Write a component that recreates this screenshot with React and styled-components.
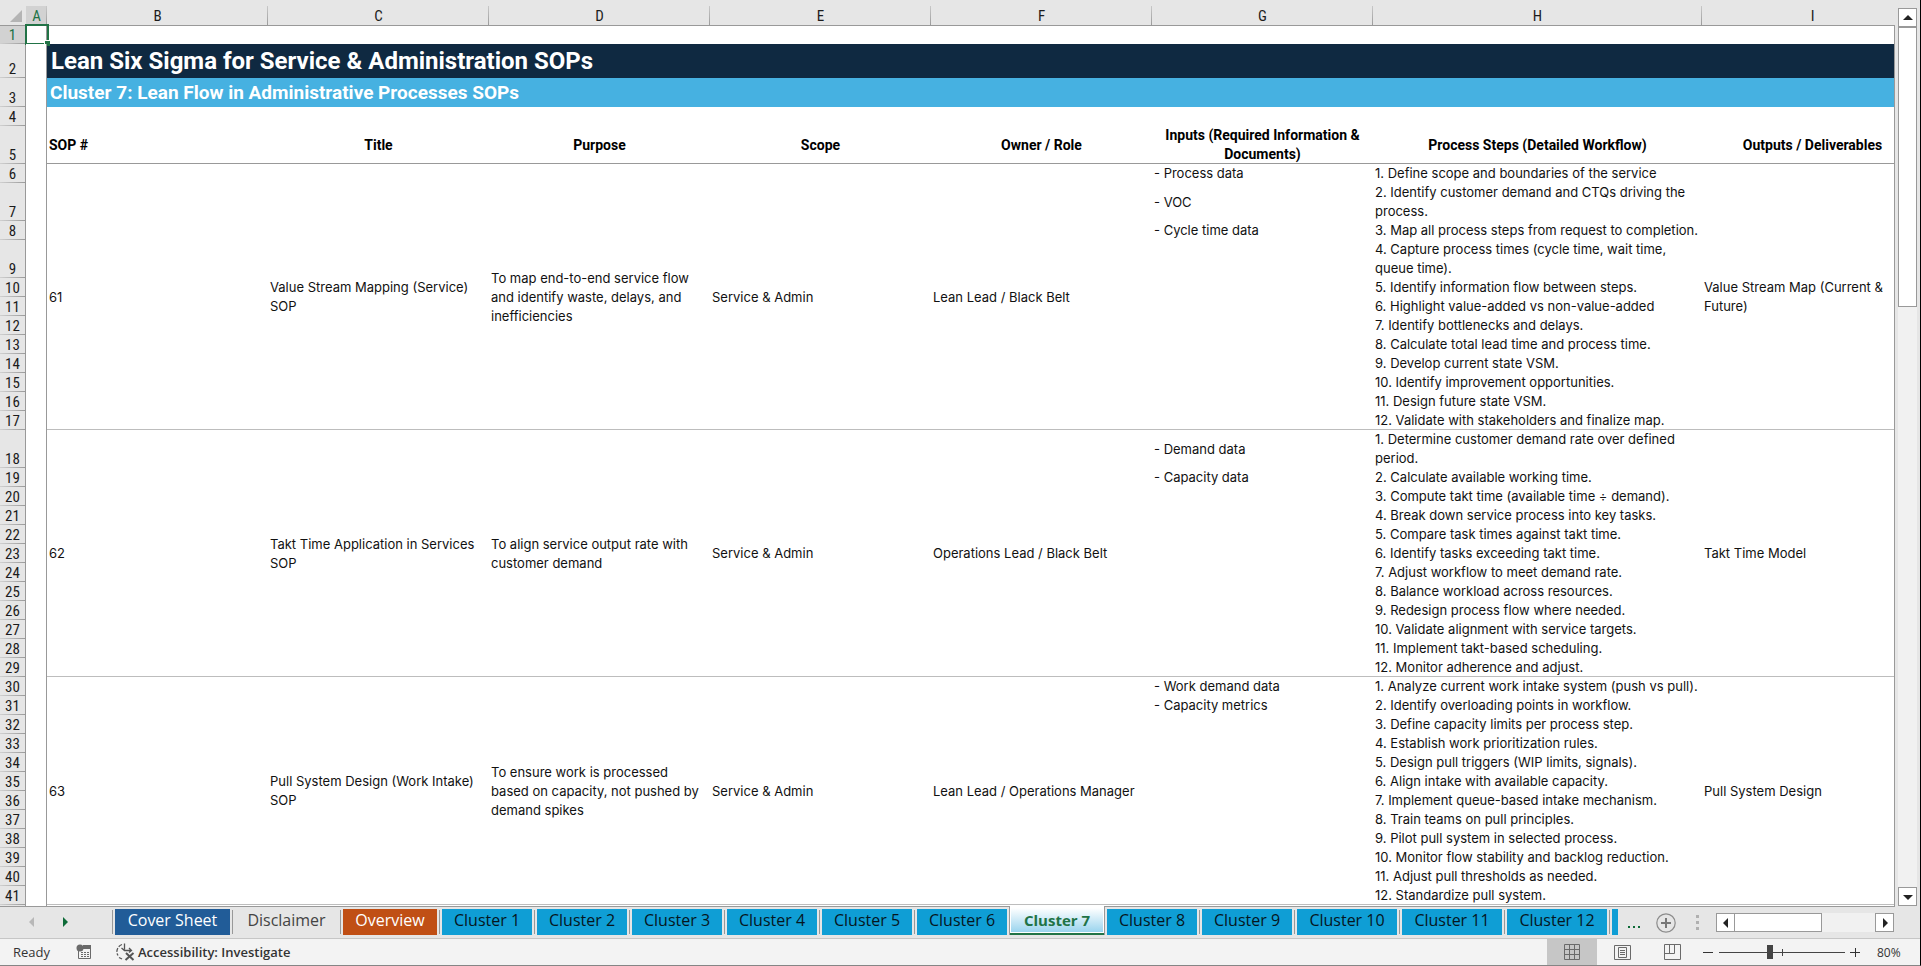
import React from 'react';
import styled, { createGlobalStyle, css } from 'styled-components';

const color = {
  chrome: '#e6e6e6',
  status: '#f3f3f3',
  line: '#999999',
  softLine: '#bdbdbd',
  selectedHeader: '#d2d2d2',
  green: '#217346',
  navy: '#0f2941',
  sky: '#46b1e1',
  clusterTab: '#0f9ed5',
  coverTab: '#215c98',
  overviewTab: '#c04f15',
  icon: '#6a6a6a',
};

const GlobalStyle = createGlobalStyle`
  *, *::before, *::after { box-sizing: border-box; }
  body { margin: 0; background: ${color.chrome}; font-family: Inter, "Liberation Sans", sans-serif; }
  button { margin: 0; padding: 0; border: 0; background: none; font: inherit; color: inherit; cursor: pointer; }
`;

const Window = styled.div`
  display: flex;
  flex-direction: column;
  height: 100vh;
  overflow: hidden;
  border-right: 1px solid #000;
  border-bottom: 1px solid #858585;
  background: ${color.chrome};
`;

const Workspace = styled.main`
  flex: 1;
  display: flex;
  min-height: 0;
`;

const SheetPane = styled.section`
  flex: 1;
  min-width: 0;
  display: flex;
  padding: 0 1px 1px 0;
  background: linear-gradient(${color.chrome} 25px, ${color.line} 25px);
`;

const SheetView = styled.div`
  flex: 1;
  min-width: 0;
  overflow: hidden;
  background: linear-gradient(90deg, ${color.chrome} 25px, ${color.line} 25px, ${color.line} 26px, #fff 26px, #fff 46px, ${color.line} 46px, ${color.line} 47px, #fff 47px);
`;

const Grid = styled.table`
  width: 1923px;
  table-layout: fixed;
  border-collapse: separate;
  border-spacing: 0;
  font-size: 13px;
  line-height: 19px;
  color: #111;

  th, td { padding: 0; }
`;

const Col = styled.col`
  width: ${(p) => p.$w}px;
`;

const Row = styled.tr`
  height: ${(p) => p.$h}px;
`;

const headerFont = css`
  font-family: "Roboto Condensed", Roboto, "Liberation Sans", sans-serif;
  font-weight: 400;
  font-size: 15px;
  color: ${(p) => (p.$selected ? color.green : '#1c1c1c')};
`;

const Corner = styled.td`
  height: 26px;
  background: ${color.chrome};
  box-shadow: inset 0 -1px ${color.line};
  vertical-align: bottom;
  text-align: right;

  svg { display: block; margin: 0 4px 4px auto; }
`;

const ColumnHeader = styled.th`
  ${headerFont}
  height: 26px;
  vertical-align: bottom;
  background:
    linear-gradient(${color.line}, ${color.line}) bottom / 100% 1px no-repeat,
    linear-gradient(#c8c8c8, ${color.line}) right bottom / 1px 20px no-repeat,
    linear-gradient(${(p) => (p.$selected ? color.selectedHeader : color.chrome)}, ${(p) => (p.$selected ? color.selectedHeader : color.chrome)}) bottom / 100% 20px no-repeat,
    ${color.chrome};
`;

const RowHeader = styled.th`
  ${headerFont}
  line-height: 18px;
  vertical-align: bottom;
  && { padding-right: 1px; }
  text-align: center;
  background:
    linear-gradient(${color.line}, ${color.line}) right / 1px 100% no-repeat,
    linear-gradient(90deg, #d0d0d0, ${color.line}) bottom / 100% 1px no-repeat,
    ${(p) => (p.$selected ? color.selectedHeader : color.chrome)};
`;

const MarginCell = styled.td`
  position: relative;
  background: #fff;
  box-shadow: inset -1px 0 ${color.line};
`;

const ActiveCell = styled.span`
  position: absolute;
  inset: -2px -2px -1px -1px;
  border: 2px solid ${color.green};

  &::after {
    content: '';
    position: absolute;
    right: -3px;
    bottom: -3px;
    width: 6px;
    height: 6px;
    border: solid #fff;
    border-width: 1px 0 0 1px;
    background: ${color.green};
  }
`;

const Banner = styled.td`
  && { padding: 0 ${(p) => (p.$main ? 4 : 3)}px; }
  background: ${(p) => (p.$main ? color.navy : color.sky)};
  color: #fff;
  font-family: Roboto, "Liberation Sans", sans-serif;
  font-weight: 700;
  font-size: ${(p) => (p.$main ? 24 : 19)}px;
  line-height: 28px;
`;

const FieldHeader = styled.th`
  && { padding: 0 2px; }
  font-family: Roboto, "Liberation Sans", sans-serif;
  font-size: 14px;
  font-weight: 700;
  color: #000;
  text-align: ${(p) => (p.$left ? 'left' : 'center')};
  box-shadow: inset 0 -1px ${color.line};
`;

const Cell = styled.td`
  && { padding: 0 2px; }
  vertical-align: middle;
  text-align: left;
  box-shadow: ${(p) => (p.$last ? `inset 0 -1px ${color.softLine}` : 'none')};
`;

const ScrollColumn = styled.div`
  display: flex;
  flex-direction: column;
  width: 25px;
  padding: 8px 3px 1px;
`;

const ArrowButton = styled.button`
  flex: none;
  display: grid;
  place-items: center;
  width: 19px;
  height: 19px;
  border: 1px solid ${color.line};
  background: #fff;
`;

const VerticalTrack = styled.div`
  flex: 1;
  display: flex;
  flex-direction: column;
  background: #f1f1f1;
`;

const VerticalThumb = styled.div`
  flex: 12;
  border: 1px solid ${color.line};
  background: #fff;
`;

const TrackRest = styled.div`
  flex: 25;
`;

const TabBar = styled.nav`
  flex: none;
  display: flex;
  height: 31px;
  font-family: "Open Sans", "Noto Sans", sans-serif;
  font-size: 16px;
  line-height: 22px;
`;

const TabArrows = styled.div`
  flex: none;
  display: flex;
  gap: 19px;
  width: 112px;
  padding: 3px 0 5px 25px;

  button { display: grid; place-items: center; width: 14px; }
`;

const TabList = styled.ul`
  flex: 1;
  display: flex;
  min-width: 0;
  margin: -1px 0 0;
  padding: 1px 0 0;
  overflow: hidden;
  list-style: none;
`;

const TabItem = styled.li`
  flex: none;
  padding: ${(p) => (p.$active ? '0' : '2px 2px 0 3px')};
  background: ${(p) => (p.$divider ? `linear-gradient(${color.line}, ${color.line}) 0 3px / 1px 24px no-repeat` : 'none')};
`;

const tones = {
  cover: [color.coverTab, '#fff'],
  plain: ['transparent', '#444'],
  overview: [color.overviewTab, '#fff'],
  cluster: [color.clusterTab, '#06161e'],
};

const Tab = styled.button`
  display: block;
  width: ${(p) => p.$w}px;
  height: 26px;
  padding-bottom: 4px;
  background: ${(p) => tones[p.$tone][0]};
  color: ${(p) => tones[p.$tone][1]};
  white-space: nowrap;

  ${(p) => p.$active && css`
    position: relative;
    height: 29px;
    margin: -1px -1px 0 0;
    padding-bottom: 2px;
    border: solid ${color.line};
    border-width: 0 1px;
    background:
      linear-gradient(${color.green}, ${color.green}) bottom / 100% 2px no-repeat,
      linear-gradient(#fff, #9ad4ee) 1px 2px / 92px 24px no-repeat,
      #fff;
    color: ${color.green};
    font-weight: 700;
    font-size: 15px;
  `}
`;

const TabTools = styled.div`
  flex: none;
  display: flex;
  align-items: center;
  padding-right: 26px;

  svg { display: block; }
`;

const MoreButton = styled.button`
  margin: 0 15px 0 9px;
`;

const Grip = styled.span`
  margin: 0 17px 0 20px;
`;

const HorizontalScroll = styled.div`
  display: flex;
  width: 178px;
  background: #f1f1f1;
`;

const HorizontalThumb = styled.div`
  width: 88px;
  margin-left: -1px;
  border: 1px solid ${color.line};
  background: #fff;
`;

const HorizontalRest = styled.div`
  flex: 1;
`;

const StatusBar = styled.footer`
  flex: none;
  display: flex;
  align-items: stretch;
  height: 27px;
  border-top: 1px solid #c6c6c6;
  background: ${color.status};
  font-family: "Open Sans", "Noto Sans", sans-serif;
  font-size: 13px;
  color: #333;

  svg { display: block; }
`;

const StatusLeft = styled.div`
  flex: 1;
  display: flex;
  align-items: center;
  padding-left: 13px;
`;

const MacroButton = styled.button`
  margin: 0 24px 0 26px;
`;

const AccessibilityButton = styled.button`
  display: flex;
  align-items: center;
  gap: 3px;
  font-weight: 600;
`;

const ViewButton = styled.button`
  display: grid;
  place-items: center;
  width: 50px;
  background: ${(p) => (p.$active ? '#c6c6c6' : 'transparent')};
`;

const ZoomControls = styled.div`
  display: flex;
  align-items: center;
  padding: 0 19px 0 6px;
`;

const ZoomRange = styled.input`
  appearance: none;
  width: 126px;
  height: 26px;
  margin: 0 5px 0 6px;
  background:
    linear-gradient(#444, #444) 63px 50% / 1px 7px no-repeat,
    linear-gradient(#444, #444) center / 100% 1px no-repeat;

  &::-webkit-slider-thumb {
    appearance: none;
    width: 6px;
    height: 14px;
    background: #444;
  }
`;

const ZoomLabel = styled.output`
  width: 24px;
  margin-left: 17px;
  font-size: 12px;
  white-space: nowrap;
`;

const Triangle = ({ d, fill = '#222' }) => (
  <svg width="10" height="10" viewBox="0 0 10 10" aria-hidden="true"><path d={d} fill={fill} /></svg>
);
const UP = 'M5 2 L10 7 H0 Z';
const DOWN = 'M0 3 H10 L5 8 Z';
const LEFT = 'M7 0 V10 L2 5 Z';
const RIGHT = 'M3 0 V10 L8 5 Z';

const AddIcon = () => (
  <svg width="20" height="20" viewBox="0 0 20 20" fill="none" aria-hidden="true">
    <circle cx="10" cy="10" r="9.2" stroke="#8c8c8c" strokeWidth="1.2" />
    <path d="M10 5v10M5 10h10" stroke="#777" strokeWidth="2" />
  </svg>
);

const MacroIcon = () => (
  <svg width="16" height="16" viewBox="0 0 16 16" fill="none" aria-hidden="true">
    <path d="M2.500 6V14.500H14.500V1.500" stroke={color.icon} />
    <path d="M7 1h8v4H7z" fill={color.icon} />
    <circle cx="4" cy="4" r="3.500" fill={color.icon} />
    <path d="M5 8.500h2M8 8.500h2M11 8.500h2M5 10.500h2M8 10.500h2M11 10.500h2M5 12.500h2M8 12.500h2M11 12.500h2" stroke={color.icon} />
  </svg>
);

const AccessibilityIcon = () => (
  <svg width="19" height="18" viewBox="0 0 19 18" fill="none" stroke="#555" aria-hidden="true">
    <path d="M6 1.500A7.500 7.500 0 0 0 2 12.500" strokeWidth="1.300" strokeDasharray="4 1.500" />
    <path d="M3 14.500 L6 16" strokeWidth="1.300" />
    <path d="M8.500 0.500V6.500M5.500 5L8.500 7.500H15.500M13 5L15.500 7.500L13 9.500" strokeWidth="1.300" />
    <path d="M10 10L17.500 17M17.500 10L9.500 17" strokeWidth="2" />
  </svg>
);

const NormalViewIcon = () => (
  <svg width="16" height="16" viewBox="0 0 16 16" fill="none" stroke={color.icon} aria-hidden="true">
    <path d="M0.500 0.500h15v15h-15zM5.500 0.500v15M10.500 0.500v15M0.500 5.500h15M0.500 10.500h15" />
  </svg>
);

const PageLayoutIcon = () => (
  <svg width="17" height="15" viewBox="0 0 17 15" fill="none" stroke={color.icon} aria-hidden="true">
    <path d="M0.500 0.500h16v14h-16zM4.500 2.500h8v10h-8zM6 5.500h5M6 7.500h5M6 9.500h5" />
  </svg>
);

const PageBreakIcon = () => (
  <svg width="17" height="16" viewBox="0 0 17 16" fill="none" stroke={color.icon} aria-hidden="true">
    <path d="M0.500 0.500h16v15h-16zM5.500 0.500v9M10.500 0.500v9M0.500 9.500h10" />
  </svg>
);

const columns = [
  ['A', 21], ['B', 221], ['C', 221], ['D', 221], ['E', 221], ['F', 221], ['G', 221], ['H', 329], ['I', 221],
];

const fields = [
  'SOP #', 'Title', 'Purpose', 'Scope', 'Owner / Role', 'Inputs (Required Information & Documents)',
  'Process Steps (Detailed Workflow)', 'Outputs / Deliverables',
];

const sops = [
  {
    start: 6,
    lead: ['61', 'Value Stream Mapping (Service) SOP', 'To map end-to-end service flow and identify waste, delays, and inefficiencies', 'Service & Admin', 'Lean Lead / Black Belt'],
    inputs: ['- Process data', '- VOC', '- Cycle time data'],
    output: 'Value Stream Map (Current & Future)',
    tall: [2, 4],
    steps: [
      '1. Define scope and boundaries of the service',
      '2. Identify customer demand and CTQs driving the process.',
      '3. Map all process steps from request to completion.',
      '4. Capture process times (cycle time, wait time, queue time).',
      '5. Identify information flow between steps.',
      '6. Highlight value-added vs non-value-added',
      '7. Identify bottlenecks and delays.',
      '8. Calculate total lead time and process time.',
      '9. Develop current state VSM.',
      '10. Identify improvement opportunities.',
      '11. Design future state VSM.',
      '12. Validate with stakeholders and finalize map.',
    ],
  },
  {
    start: 18,
    lead: ['62', 'Takt Time Application in Services SOP', 'To align service output rate with customer demand', 'Service & Admin', 'Operations Lead / Black Belt'],
    inputs: ['- Demand data', '- Capacity data'],
    output: 'Takt Time Model',
    tall: [1],
    steps: [
      '1. Determine customer demand rate over defined period.',
      '2. Calculate available working time.',
      '3. Compute takt time (available time ÷ demand).',
      '4. Break down service process into key tasks.',
      '5. Compare task times against takt time.',
      '6. Identify tasks exceeding takt time.',
      '7. Adjust workflow to meet demand rate.',
      '8. Balance workload across resources.',
      '9. Redesign process flow where needed.',
      '10. Validate alignment with service targets.',
      '11. Implement takt-based scheduling.',
      '12. Monitor adherence and adjust.',
    ],
  },
  {
    start: 30,
    lead: ['63', 'Pull System Design (Work Intake) SOP', 'To ensure work is processed based on capacity, not pushed by demand spikes', 'Service & Admin', 'Lean Lead / Operations Manager'],
    inputs: ['- Work demand data', '- Capacity metrics'],
    output: 'Pull System Design',
    tall: [],
    steps: [
      '1. Analyze current work intake system (push vs pull).',
      '2. Identify overloading points in workflow.',
      '3. Define capacity limits per process step.',
      '4. Establish work prioritization rules.',
      '5. Design pull triggers (WIP limits, signals).',
      '6. Align intake with available capacity.',
      '7. Implement queue-based intake mechanism.',
      '8. Train teams on pull principles.',
      '9. Pilot pull system in selected process.',
      '10. Monitor flow stability and backlog reduction.',
      '11. Adjust pull thresholds as needed.',
      '12. Standardize pull system.',
    ],
  },
];

const clusterTab = (n) => ({ label: `Cluster ${n}`, tone: 'cluster', w: n > 9 ? 100 : 90 });
const tabs = [
  { label: 'Cover Sheet', tone: 'cover', w: 115 },
  { label: 'Disclaimer', tone: 'plain', w: 103 },
  { label: 'Overview', tone: 'overview', w: 94 },
  ...Array.from({ length: 12 }, (_, i) => clusterTab(i + 1)),
];
const ACTIVE = 'Cluster 7';

function SopRows({ sop }) {
  const count = sop.steps.length;
  return sop.steps.map((step, i) => (
    <Row key={step} $h={sop.tall.includes(i + 1) ? 38 : 19}>
      <RowHeader scope="row">{sop.start + i}</RowHeader>
      <MarginCell />
      {i === 0 && sop.lead.map((text) => <Cell key={text} rowSpan={count} $last>{text}</Cell>)}
      <Cell $last={i === count - 1}>{sop.inputs[i]}</Cell>
      <Cell $last={i === count - 1}>{step}</Cell>
      {i === 0 && <Cell rowSpan={count} $last>{sop.output}</Cell>}
    </Row>
  ));
}

function Sheet() {
  return (
    <Grid>
      <colgroup>
        <Col $w={26} />
        {columns.map(([name, w]) => <Col key={name} $w={w} />)}
      </colgroup>
      <thead>
        <Row $h={26}>
          <Corner>
            <svg width="12" height="12" viewBox="0 0 12 12" aria-hidden="true"><path d="M12 0V12H0Z" fill="#b4b4b4" /></svg>
          </Corner>
          {columns.map(([name]) => <ColumnHeader key={name} scope="col" $selected={name === 'A'}>{name}</ColumnHeader>)}
        </Row>
      </thead>
      <tbody>
        <Row $h={18}>
          <RowHeader scope="row" $selected>1</RowHeader>
          <MarginCell><ActiveCell /></MarginCell>
          <td colSpan={8} />
        </Row>
        <Row $h={34}>
          <RowHeader scope="row">2</RowHeader>
          <MarginCell />
          <Banner colSpan={8} $main>Lean Six Sigma for Service &amp; Administration SOPs</Banner>
        </Row>
        <Row $h={29}>
          <RowHeader scope="row">3</RowHeader>
          <MarginCell />
          <Banner colSpan={8}>Cluster 7: Lean Flow in Administrative Processes SOPs</Banner>
        </Row>
        <Row $h={19}>
          <RowHeader scope="row">4</RowHeader>
          <MarginCell />
          <td colSpan={8} />
        </Row>
        <Row $h={38}>
          <RowHeader scope="row">5</RowHeader>
          <MarginCell />
          {fields.map((name, i) => <FieldHeader key={name} scope="col" $left={i === 0}>{name}</FieldHeader>)}
        </Row>
        {sops.map((sop) => <SopRows key={sop.start} sop={sop} />)}
      </tbody>
    </Grid>
  );
}

export default function App() {
  return (
    <Window>
      <GlobalStyle />
      <Workspace>
        <SheetPane>
          <SheetView><Sheet /></SheetView>
        </SheetPane>
        <ScrollColumn>
          <ArrowButton aria-label="Scroll up"><Triangle d={UP} /></ArrowButton>
          <VerticalTrack>
            <VerticalThumb />
            <TrackRest />
          </VerticalTrack>
          <ArrowButton aria-label="Scroll down"><Triangle d={DOWN} /></ArrowButton>
        </ScrollColumn>
      </Workspace>

      <TabBar aria-label="Sheets">
        <TabArrows>
          <button aria-label="Previous sheets"><Triangle d={LEFT} fill="#b8b8b8" /></button>
          <button aria-label="Next sheets"><Triangle d={RIGHT} fill="#0e6b38" /></button>
        </TabArrows>
        <TabList>
          {tabs.map((tab, i) => {
            const active = tab.label === ACTIVE;
            const afterActive = i > 0 && tabs[i - 1].label === ACTIVE;
            return (
              <TabItem key={tab.label} $active={active} $divider={!active && !afterActive}>
                <Tab $tone={tab.tone} $w={active ? tab.w + 6 : tab.w} $active={active} aria-current={active ? 'page' : undefined}>
                  {tab.label}
                </Tab>
              </TabItem>
            );
          })}
          <TabItem $divider><Tab $tone="cluster" $w={100} aria-label="Next cluster" /></TabItem>
        </TabList>
        <TabTools>
          <MoreButton aria-label="More sheets">
            <svg width="14" height="12" viewBox="0 0 14 12" fill="#0e6b38" aria-hidden="true"><path d="M1 9h2v2H1zM6 9h2v2H6zM11 9h2v2h-2z" /></svg>
          </MoreButton>
          <button aria-label="New sheet"><AddIcon /></button>
          <Grip>
            <svg width="3" height="15" viewBox="0 0 3 15" fill="#b0b0b0" aria-hidden="true"><path d="M0 0h3v3H0zM0 6h3v3H0zM0 12h3v3H0z" /></svg>
          </Grip>
          <HorizontalScroll>
            <ArrowButton aria-label="Scroll left"><Triangle d={LEFT} /></ArrowButton>
            <HorizontalThumb />
            <HorizontalRest />
            <ArrowButton aria-label="Scroll right"><Triangle d={RIGHT} /></ArrowButton>
          </HorizontalScroll>
        </TabTools>
      </TabBar>

      <StatusBar>
        <StatusLeft>
          Ready
          <MacroButton aria-label="Record macro"><MacroIcon /></MacroButton>
          <AccessibilityButton><AccessibilityIcon />Accessibility: Investigate</AccessibilityButton>
        </StatusLeft>
        <ViewButton $active aria-label="Normal view"><NormalViewIcon /></ViewButton>
        <ViewButton aria-label="Page layout view"><PageLayoutIcon /></ViewButton>
        <ViewButton aria-label="Page break preview"><PageBreakIcon /></ViewButton>
        <ZoomControls>
          <button aria-label="Zoom out">
            <svg width="10" height="10" viewBox="0 0 10 10" stroke="#333" aria-hidden="true"><path d="M0 5.500h10" /></svg>
          </button>
          <ZoomRange type="range" min="0" max="100" defaultValue="40" aria-label="Zoom" />
          <button aria-label="Zoom in">
            <svg width="10" height="10" viewBox="0 0 10 10" stroke="#333" aria-hidden="true"><path d="M0 5.500h10M5.500 1v9" /></svg>
          </button>
          <ZoomLabel>80%</ZoomLabel>
        </ZoomControls>
      </StatusBar>
    </Window>
  );
}
